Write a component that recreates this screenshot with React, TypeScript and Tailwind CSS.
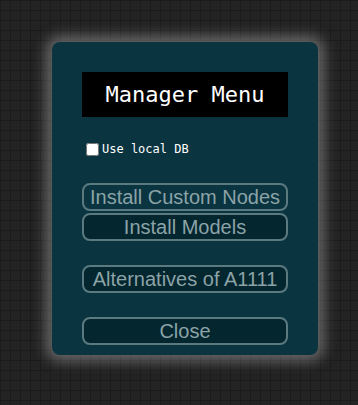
import { useState } from 'react';

const buttons = [
  { label: 'Install Custom Nodes', dark: false, gap: '' },
  { label: 'Install Models', dark: true, gap: 'mt-[2px]' },
  { label: 'Alternatives of A1111', dark: true, gap: 'mt-6' },
  { label: 'Close', dark: true, gap: 'mt-6' },
];

export default function App() {
  const [localDb, setLocalDb] = useState(false);

  return (
    <div className="w-[358px] h-[405px] bg-[#232323] bg-[linear-gradient(#1b1b1b_1px,transparent_1px),linear-gradient(90deg,#1b1b1b_1px,transparent_1px)] bg-[size:10px_10px] pt-[42px] pl-[52px]">
      <div className="w-[266px] h-[313px] rounded-lg bg-[#0a3440] shadow-[0_0_14px_6px_rgba(210,210,210,0.4)] flex flex-col px-[30px] pt-[30px]">
        {/* Title */}
        <div className="h-[45px] bg-black flex items-center justify-center text-white text-[22px] font-['DejaVu_Sans_Mono',monospace]">
          Manager Menu
        </div>

        {/* Local DB */}
        <label className="mt-6 h-4 flex items-center text-white text-xs font-['DejaVu_Sans_Mono',monospace]">
          <input
            type="checkbox"
            checked={localDb}
            onChange={(e) => setLocalDb(e.target.checked)}
            className="ml-1 mr-[3px] w-[13px] h-[13px]"
          />
          Use local DB
        </label>

        <div className="mt-[26px] flex flex-col">
          {buttons.map((b) => (
            <button
              key={b.label}
              className={`${b.gap} h-[28px] rounded-lg border-2 border-[#5b7a80] ${b.dark ? 'bg-[#03262f]' : 'bg-[#0a3440]'} text-[#8ca3a7] text-[20px] leading-none font-['Liberation_Sans',Arial,sans-serif] flex items-center justify-center`}
            >
              {b.label}
            </button>
          ))}
        </div>
      </div>
    </div>
  );
}
